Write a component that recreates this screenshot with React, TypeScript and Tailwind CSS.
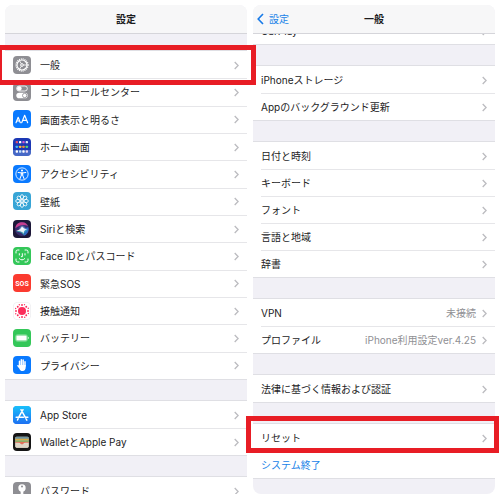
import type { ReactNode } from 'react';

type IconName =
  | 'general'
  | 'control'
  | 'display'
  | 'home'
  | 'accessibility'
  | 'wallpaper'
  | 'siri'
  | 'faceid'
  | 'sos'
  | 'exposure'
  | 'battery'
  | 'privacy'
  | 'appstore'
  | 'wallet'
  | 'password';

interface Item {
  label: string;
  icon?: IconName;
  value?: string;
  action?: boolean;
}

const mainItems: Item[] = [
  { label: '一般', icon: 'general' },
  { label: 'コントロールセンター', icon: 'control' },
  { label: '画面表示と明るさ', icon: 'display' },
  { label: 'ホーム画面', icon: 'home' },
  { label: 'アクセシビリティ', icon: 'accessibility' },
  { label: '壁紙', icon: 'wallpaper' },
  { label: 'Siriと検索', icon: 'siri' },
  { label: 'Face IDとパスコード', icon: 'faceid' },
  { label: '緊急SOS', icon: 'sos' },
  { label: '接触通知', icon: 'exposure' },
  { label: 'バッテリー', icon: 'battery' },
  { label: 'プライバシー', icon: 'privacy' },
];

const storeItems: Item[] = [
  { label: 'App Store', icon: 'appstore' },
  { label: 'WalletとApple Pay', icon: 'wallet' },
];

const dateItems: Item[] = [
  { label: '日付と時刻' },
  { label: 'キーボード' },
  { label: 'フォント' },
  { label: '言語と地域' },
  { label: '辞書' },
];

const iconBackgrounds: Record<IconName, string> = {
  general: '#8e8e93',
  control: '#8e8e93',
  display: '#0a7aff',
  home: '#1c38b4',
  accessibility: '#0a7aff',
  wallpaper: '#38a5d6',
  siri: '#1c1738',
  faceid: '#34c759',
  sos: '#fb3b30',
  exposure: '#ffffff',
  battery: '#34c759',
  privacy: '#0a7aff',
  appstore: '#1e90f8',
  wallet: '#151515',
  password: '#8e8e93',
};

const petals = [0, 45, 90, 135, 180, 225, 270, 315];

const iconDrawings: Record<IconName, ReactNode> = {
  general: (
    <g fill="none" stroke="#fff">
      <circle cx="27" cy="27" r="18" strokeWidth="4" strokeDasharray="3 2.65" />
      <circle cx="27" cy="27" r="15" strokeWidth="3.500" />
      <circle cx="27" cy="27" r="4" strokeWidth="3" />
      <path d="M31 27h11M25 23.500l-6-10M25 30.500l-6 10" strokeWidth="2.500" />
    </g>
  ),
  control: (
    <g>
      <rect x="11" y="9" width="32" height="15" rx="7.500" fill="none" stroke="#fff" strokeWidth="2.500" />
      <circle cx="19" cy="16.500" r="7" fill="#fff" />
      <rect x="10" y="29" width="34" height="17" rx="8.500" fill="#fff" />
      <circle cx="35" cy="37.500" r="6.500" fill="#fff" stroke="#8e8e93" strokeWidth="2.500" />
    </g>
  ),
  display: (
    <g fill="none" stroke="#fff" strokeWidth="3.500" strokeLinejoin="round" strokeLinecap="round">
      <path d="M9 38l6.500-16L22 38M11.500 33h8" />
      <path d="M26 38l9-22 9 22M29.500 31h11" />
    </g>
  ),
  home: (
    <g>
      <rect y="36" width="54" height="18" fill="#6d96d8" opacity="0.5" />
      {[
        ['#e0526b', '#fff', '#d05ad0', '#dfe6f5'],
        ['#3fb8f0', '#f3b93a', '#ee8b3a', '#54cf7a'],
        ['#fff', '#bfe3ff', '#fff', '#e5d4f5'],
      ].map((row, y) =>
        row.map((color, x) => (
          <rect key={`${x}-${y}`} x={8 + x * 10} y={9 + y * 14} width="7" height="7" rx="2" fill={color} />
        ))
      )}
    </g>
  ),
  accessibility: (
    <g>
      <circle cx="27" cy="27" r="18.500" fill="none" stroke="#fff" strokeWidth="2.500" />
      <circle cx="27" cy="16.500" r="3.200" fill="#fff" />
      <path
        d="M15.500 22.500L27 24l11.500-1.500M27 24v8M25 24l-.5 8-4 10M29 24l.5 8 4 10"
        fill="none"
        stroke="#fff"
        strokeWidth="3"
        strokeLinecap="round"
        strokeLinejoin="round"
      />
    </g>
  ),
  wallpaper: (
    <g fill="none" stroke="#fff" strokeWidth="2.500">
      {petals.map((angle) => (
        <ellipse key={angle} cx="27" cy="15" rx="4.800" ry="7" transform={`rotate(${angle} 27 27)`} />
      ))}
      <circle cx="27" cy="27" r="4" />
    </g>
  ),
  siri: (
    <g>
      <defs>
        <radialGradient id="siri-glow" cx="0.5" cy="0.5" r="0.5">
          <stop offset="0" stopColor="#fff" />
          <stop offset="0.35" stopColor="#8fb6e8" stopOpacity="0.8" />
          <stop offset="1" stopColor="#2b3d86" stopOpacity="0" />
        </radialGradient>
      </defs>
      <circle cx="27" cy="27" r="21" fill="#392b6e" />
      <path d="M7 25a20 20 0 0 1 38-7c-12-5-24-3-38 7z" fill="#c63d8e" />
      <path d="M46 22a20 20 0 0 1-14 25c3-8 3-16-3-21z" fill="#2f6fc4" />
      <path d="M9 35c10-2 16-6 19-13 4 8 10 9 17 9-8 3-12 7-13 15-5-8-12-11-23-11z" fill="#32c5c8" opacity="0.7" />
      <circle cx="28" cy="26" r="13" fill="url(#siri-glow)" />
      <path d="M9 32c11-2 16-6 18-13 3 7 9 9 17 9-9 2-12 5-12 13-4-7-11-9-23-9z" fill="#fff" opacity="0.85" />
    </g>
  ),
  faceid: (
    <g fill="none" stroke="#fff" strokeWidth="3" strokeLinecap="round">
      <path d="M9 18v-4a5 5 0 0 1 5-5h4M36 9h4a5 5 0 0 1 5 5v4M45 36v4a5 5 0 0 1-5 5h-4M18 45h-4a5 5 0 0 1-5-5v-4" />
      <path d="M19 20v4M36 20v4M28 20v9h-3M19 35c4 5 12 5 16 0" />
    </g>
  ),
  sos: (
    <text
      x="27"
      y="35"
      fill="#fff"
      fontSize="21"
      fontWeight="700"
      textAnchor="middle"
      fontFamily="Roboto, 'Liberation Sans', sans-serif"
    >
      SOS
    </text>
  ),
  exposure: (
    <g fill="#fb2d5a">
      <circle cx="27" cy="27" r="12" />
      {petals.map((angle) => (
        <g key={angle} transform={`rotate(${angle} 27 27)`}>
          <circle cx="27" cy="9" r="2.800" />
          <circle cx="34.500" cy="8" r="2" />
        </g>
      ))}
    </g>
  ),
  battery: (
    <g>
      <rect x="8" y="17.500" width="35" height="19" rx="5" fill="none" stroke="#a9e8b9" strokeWidth="2" />
      <rect x="10" y="19.500" width="31" height="15" rx="3" fill="#fff" />
      <path d="M45 23.500c3 1 3 6 0 7z" fill="#fff" />
    </g>
  ),
  privacy: (
    <g fill="none" stroke="#fff" strokeWidth="4.500" strokeLinecap="round">
      <path d="M19.500 29V16M25 27V11M30.500 27V12M36 30V17" />
      <path d="M17.200 27h21v6c0 8-4 12-9 12-6 0-8-3-10-7l-7-9c1-3 4-2 5 0z" fill="#fff" stroke="none" />
    </g>
  ),
  appstore: (
    <g>
      <defs>
        <linearGradient id="store-blue" x1="0" y1="0" x2="0" y2="1">
          <stop offset="0" stopColor="#1ac1fb" />
          <stop offset="1" stopColor="#1d70f2" />
        </linearGradient>
      </defs>
      <rect width="54" height="54" fill="url(#store-blue)" />
      <path
        d="M24 11l13.500 24M30 11L18 32M9.500 34h22M39 34h5.500M15.500 38l-2 4M39.500 39l2 3.500"
        fill="none"
        stroke="#fff"
        strokeWidth="4.500"
        strokeLinecap="round"
      />
    </g>
  ),
  wallet: (
    <g>
      <rect x="7" y="11" width="40" height="33" rx="4" fill="#d9d1c0" />
      <path d="M7 15a4 4 0 0 1 4-4h32a4 4 0 0 1 4 4v3H7z" fill="#6f95a0" />
      <path d="M7 17h40v5H7z" fill="#d9ab45" />
      <path d="M7 22h40v5H7z" fill="#8daa62" />
      <path d="M7 27h40v4H35c-3 0-3 6-8 6s-5-6-8-6H7z" fill="#e2705a" />
      <path d="M7 29h11c4 0 4 5 9 5s5-5 9-5h11v11a4 4 0 0 1-4 4H11a4 4 0 0 1-4-4z" fill="#ded6c8" />
    </g>
  ),
  password: (
    <g>
      <path d="M23 22h8v29l-4 3-4-4z" fill="#fff" />
      <circle cx="27" cy="18" r="11" fill="#fff" />
      <circle cx="27" cy="13.500" r="3" fill="#8e8e93" />
    </g>
  ),
};

function AppIcon({ name }: { name: IconName }) {
  return (
    <svg viewBox="0 0 54 54" className="size-[18px] shrink-0 overflow-hidden rounded-[4px]" aria-hidden="true">
      <rect width="54" height="54" fill={iconBackgrounds[name]} />
      {iconDrawings[name]}
      {name === 'exposure' && (
        <rect x="1" y="1" width="52" height="52" rx="11" fill="none" stroke="#e8e8ec" strokeWidth="2" />
      )}
    </svg>
  );
}

function Chevron() {
  return (
    <svg viewBox="0 0 5 9" className="h-[9px] w-[5px] shrink-0" aria-hidden="true">
      <path d="M.7 1l3.400 3.500L.7 8" fill="none" stroke="#bcbcc0" strokeWidth="1.300" />
    </svg>
  );
}

function Row({ item, first }: { item: Item; first: boolean }) {
  return (
    <li className="flex min-h-[27px] flex-1">
      <button type="button" className="flex min-w-0 flex-1 items-stretch gap-[9px] pl-2 text-left">
        {item.icon && (
          <span className="flex items-center">
            <AppIcon name={item.icon} />
          </span>
        )}
        <span
          className={`flex min-w-0 flex-1 items-center justify-between gap-2 border-t pr-2 ${
            first ? 'border-transparent' : 'border-[#e6e6e9]'
          }`}
        >
          <span className={item.action ? 'whitespace-nowrap text-[#2083e8]' : 'whitespace-nowrap'}>{item.label}</span>
          {!item.action && (
            <span className="flex items-center gap-[6px] whitespace-nowrap text-[#909094]">
              {item.value}
              <Chevron />
            </span>
          )}
        </span>
      </button>
    </li>
  );
}

function Group({ items, className = '' }: { items: Item[]; className?: string }) {
  return (
    <ul className={`flex shrink-0 flex-col bg-white outline outline-[#dfdfe4] ${className}`}>
      {items.map((item, index) => (
        <Row key={item.label} item={item} first={index === 0} />
      ))}
    </ul>
  );
}

function Panel({ title, back, className, children }: {
  title: string;
  back?: string;
  className: string;
  children: ReactNode;
}) {
  return (
    <section className={`flex min-w-0 flex-1 flex-col overflow-hidden bg-[#f1f0f6] ${className}`}>
      <header className="relative z-10 grid h-[29px] shrink-0 grid-cols-3 items-center border-b border-[#d5d5da] bg-[#f7f7f8]">
        {back ? (
          <a href="#settings" className="flex items-center gap-[5px] pl-1 text-[#2083e8]">
            <svg viewBox="0 0 7 12" className="h-3 w-[7px]" aria-hidden="true">
              <path d="M6 1L1.200 6 6 11" fill="none" stroke="#1679e8" strokeWidth="1.600" />
            </svg>
            {back}
          </a>
        ) : (
          <span />
        )}
        <h1 className="text-center font-bold">{title}</h1>
      </header>
      <div className="flex min-h-0 flex-1 flex-col gap-[22px] overflow-hidden">{children}</div>
    </section>
  );
}

export default function App() {
  return (
    <main className="relative flex h-screen gap-[6px] overflow-hidden bg-white px-[5px] pt-[5px] pb-[6px] font-[Inter,'Noto_Sans_CJK_JP',sans-serif] text-[10px] leading-4 text-[#1c1c1e]">
      <Panel title="設定" className="rounded-t-lg">
        <Group items={mainItems} className="mt-[17px] min-h-[328px]" />
        <Group items={storeItems} />
        <Group items={[{ label: 'パスワード', icon: 'password' }]} />
      </Panel>

      <Panel title="一般" back="設定" className="rounded-lg">
        <Group items={[{ label: 'CarPlay' }]} className="-mt-[17px]" />
        <Group items={[{ label: 'iPhoneストレージ' }, { label: 'Appのバックグラウンド更新' }]} />
        <Group items={dateItems} className="min-h-[135px]" />
        <Group
          items={[
            { label: 'VPN', value: '未接続' },
            { label: 'プロファイル', value: 'iPhone利用設定ver.4.25' },
          ]}
        />
        <Group items={[{ label: '法律に基づく情報および認証' }]} />
        <Group items={[{ label: 'リセット' }, { label: 'システム終了', action: true }]} />
      </Panel>

      {/* Callout frames around the rows to tap */}
      <div className="pointer-events-none absolute top-[45px] -left-[3px] h-10 w-[259px] border-5 border-[#e81d25]" />
      <div className="pointer-events-none absolute top-[416px] right-px h-[37px] w-[253px] border-5 border-[#e81d25]" />
    </main>
  );
}
